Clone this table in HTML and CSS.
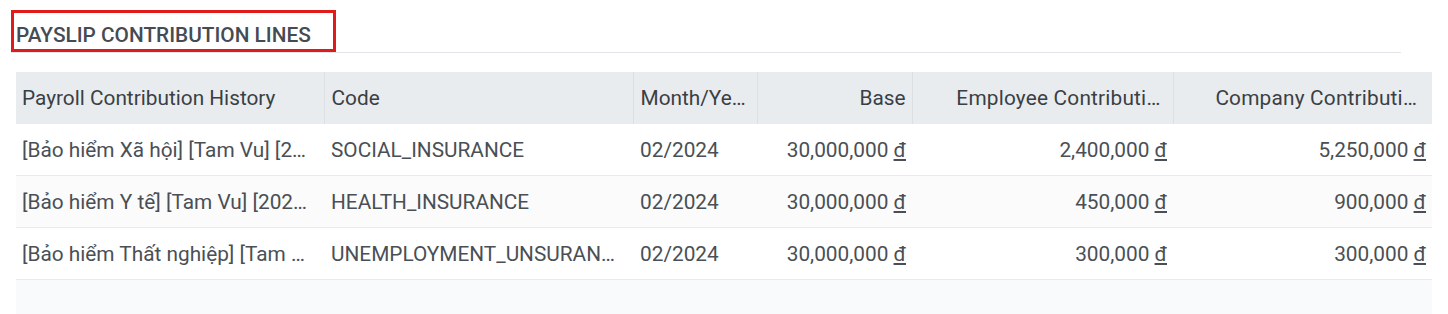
FILE: index.html
```html
<!DOCTYPE html>
<html lang="vi">
<head>
<meta charset="utf-8">
<title>Payslip Contribution Lines</title>
<link rel="stylesheet" href="styles.css">
</head>
<body>
<section class="panel">
  <div class="sep">
    <h2 class="title">PAYSLIP CONTRIBUTION LINES</h2>
  </div>
  <table class="list">
    <colgroup>
      <col class="c-name"><col class="c-code"><col class="c-month"><col class="c-base"><col class="c-emp"><col class="c-comp">
    </colgroup>
    <thead>
      <tr>
        <th>Payroll Contribution History</th>
        <th>Code</th>
        <th>Month/Ye…</th>
        <th class="num">Base</th>
        <th class="num h-emp">Employee Contributi…</th>
        <th class="num h-comp">Company Contributi…</th>
      </tr>
    </thead>
    <tbody>
      <tr>
        <td>[Bảo hiểm Xã hội] [Tam Vu] [2…</td>
        <td>SOCIAL_INSURANCE</td>
        <td>02/2024</td>
        <td class="num">30,000,000 <span class="cur">đ</span></td>
        <td class="num">2,400,000 <span class="cur">đ</span></td>
        <td class="num">5,250,000 <span class="cur">đ</span></td>
      </tr>
      <tr class="alt">
        <td>[Bảo hiểm Y tế] [Tam Vu] [202…</td>
        <td>HEALTH_INSURANCE</td>
        <td>02/2024</td>
        <td class="num">30,000,000 <span class="cur">đ</span></td>
        <td class="num">450,000 <span class="cur">đ</span></td>
        <td class="num">900,000 <span class="cur">đ</span></td>
      </tr>
      <tr>
        <td>[Bảo hiểm Thất nghiệp] [Tam …</td>
        <td>UNEMPLOYMENT_UNSURAN…</td>
        <td>02/2024</td>
        <td class="num">30,000,000 <span class="cur">đ</span></td>
        <td class="num">300,000 <span class="cur">đ</span></td>
        <td class="num">300,000 <span class="cur">đ</span></td>
      </tr>
      <tr class="filler">
        <td colspan="6"></td>
      </tr>
    </tbody>
  </table>
</section>
</body>
</html>
```

FILE: styles.css
```css
html, body {
  margin: 0;
  padding: 0;
  background: #ffffff;
}
body {
  font-family: Roboto, "Noto Sans", "Liberation Sans", sans-serif;
  color: #4a4f55;
}
.panel {
  padding: 10px 0 0 11px;
}
.sep {
  width: 1390px;
  border-bottom: 1px solid #e2e4e7;
  display: flex;
}
.title {
  margin: 0;
  box-sizing: border-box;
  width: 325px;
  height: 42px;
  border: 3px solid #e01b1b;
  padding: 7px 0 0 2px;
  display: flex;
  align-items: center;
  font-size: 20.8px;
  font-weight: 500;
  color: #454b52;
  letter-spacing: 0;
}
.list {
  margin: 19px 0 0 5px;
  width: 1416px;
  table-layout: fixed;
  border-collapse: collapse;
  font-size: 20.8px;
}
.c-name { width: 308px; }
.c-code { width: 309px; }
.c-month { width: 124px; }
.c-base { width: 155px; }
.c-emp { width: 261px; }
.c-comp { width: 259px; }
.list th,
.list td {
  padding: 0 6px 0 7px;
  white-space: nowrap;
  overflow: hidden;
  text-align: left;
}
.list th {
  height: 52px;
  background: #e9ecef;
  font-weight: 400;
  color: #3a3f45;
  border-left: 1px solid #dcdfe3;
}
.list th:first-child {
  border-left: none;
  padding-left: 6px;
}
.list th.h-emp {
  padding-right: 12px;
  letter-spacing: 0.2px;
}
.list th.h-comp {
  padding-right: 15px;
  letter-spacing: 0.2px;
}
.list td:first-child {
  padding-left: 6px;
}
.list td {
  height: 51px;
  border-bottom: 1px solid #e8eaed;
  color: #4a4f55;
}
.list .num {
  text-align: right;
}
.list tr.alt td {
  background: #fbfbfb;
}
.list tr.filler td {
  height: 34px;
  border-bottom: none;
  background: #f9fafb;
}
.cur {
  text-decoration: underline;
}
```
